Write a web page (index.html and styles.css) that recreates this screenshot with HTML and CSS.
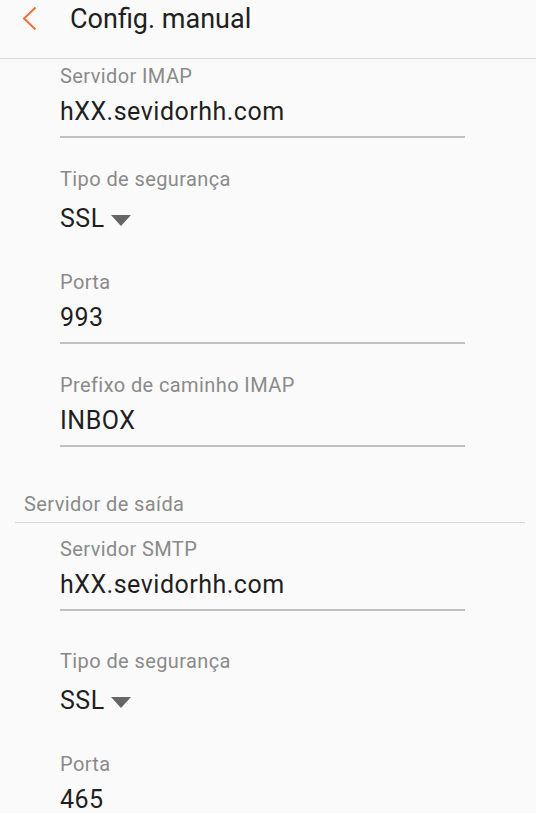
FILE: index.html
```html
<!DOCTYPE html>
<html lang="pt">
<head>
  <meta charset="UTF-8">
  <meta name="viewport" content="width=device-width, initial-scale=1.0">
  <title>Config. manual</title>
  <link rel="stylesheet" href="styles.css">
</head>
<body>
  <header class="appbar">
    <svg class="back" width="16" height="26" viewBox="0 0 16 26">
      <path d="M13.5 1.5 L2 12.5 L13.5 23.5" fill="none" stroke="#f2703a" stroke-width="2"/>
    </svg>
    <h1>Config. manual</h1>
  </header>

  <main>
    <section class="fields">
      <div class="field">
        <div class="label">Servidor IMAP</div>
        <div class="value input">hXX.sevidorhh.com</div>
      </div>
      <div class="field">
        <div class="label">Tipo de segurança</div>
        <div class="value select">SSL <span class="caret"></span></div>
      </div>
      <div class="field">
        <div class="label">Porta</div>
        <div class="value input">993</div>
      </div>
      <div class="field">
        <div class="label">Prefixo de caminho IMAP</div>
        <div class="value input">INBOX</div>
      </div>
    </section>

    <h2 class="section-title">Servidor de saída</h2>

    <section class="fields">
      <div class="field wide">
        <div class="label">Servidor SMTP</div>
        <div class="value input">hXX.sevidorhh.com</div>
      </div>
      <div class="field">
        <div class="label">Tipo de segurança</div>
        <div class="value select">SSL <span class="caret"></span></div>
      </div>
      <div class="field">
        <div class="label">Porta</div>
        <div class="value input">465</div>
      </div>
    </section>
  </main>
</body>
</html>
```

FILE: styles.css
```css
body { margin: 0; background: #fafafa; font-family: Roboto, "Noto Sans", sans-serif; color: #1f1f1f; overflow: hidden; }

.appbar { display: flex; align-items: flex-start; height: 59px; box-sizing: border-box; border-bottom: 1px solid #d9d9d9; padding-top: 2px; }
.appbar .back { margin: 4px 0 0 22px; flex: none; }
.appbar h1 { margin: 0 0 0 32px; font-size: 27px; font-weight: 400; line-height: 34px; color: #212121; }

main { padding-top: 5px; }
.fields { padding-left: 60px; }
.field { width: 405px; margin-bottom: 29px; }
.field.wide { margin-bottom: 38px; }
.label { font-size: 20px; line-height: 24px; letter-spacing: 0.4px; color: #8a8a8a; }
.value { font-size: 25px; line-height: 32px; letter-spacing: 0.5px; margin-top: 8px; }
.value.input { padding-bottom: 8px; border-bottom: 2px solid #c0c0c0; }
.value.select { margin-top: 12px; padding-bottom: 6px; display: flex; align-items: center; }
.caret { width: 0; height: 0; margin: 2px 0 0 6px; border-left: 10px solid transparent; border-right: 10px solid transparent; border-top: 11px solid #666; }

.section-title { margin: 0 11px 14px 15px; padding: 16px 0 6px 9px; border-bottom: 1px solid #d6d6d6; font-size: 20px; font-weight: 400; line-height: 24px; letter-spacing: 0.4px; color: #8a8a8a; }
```
